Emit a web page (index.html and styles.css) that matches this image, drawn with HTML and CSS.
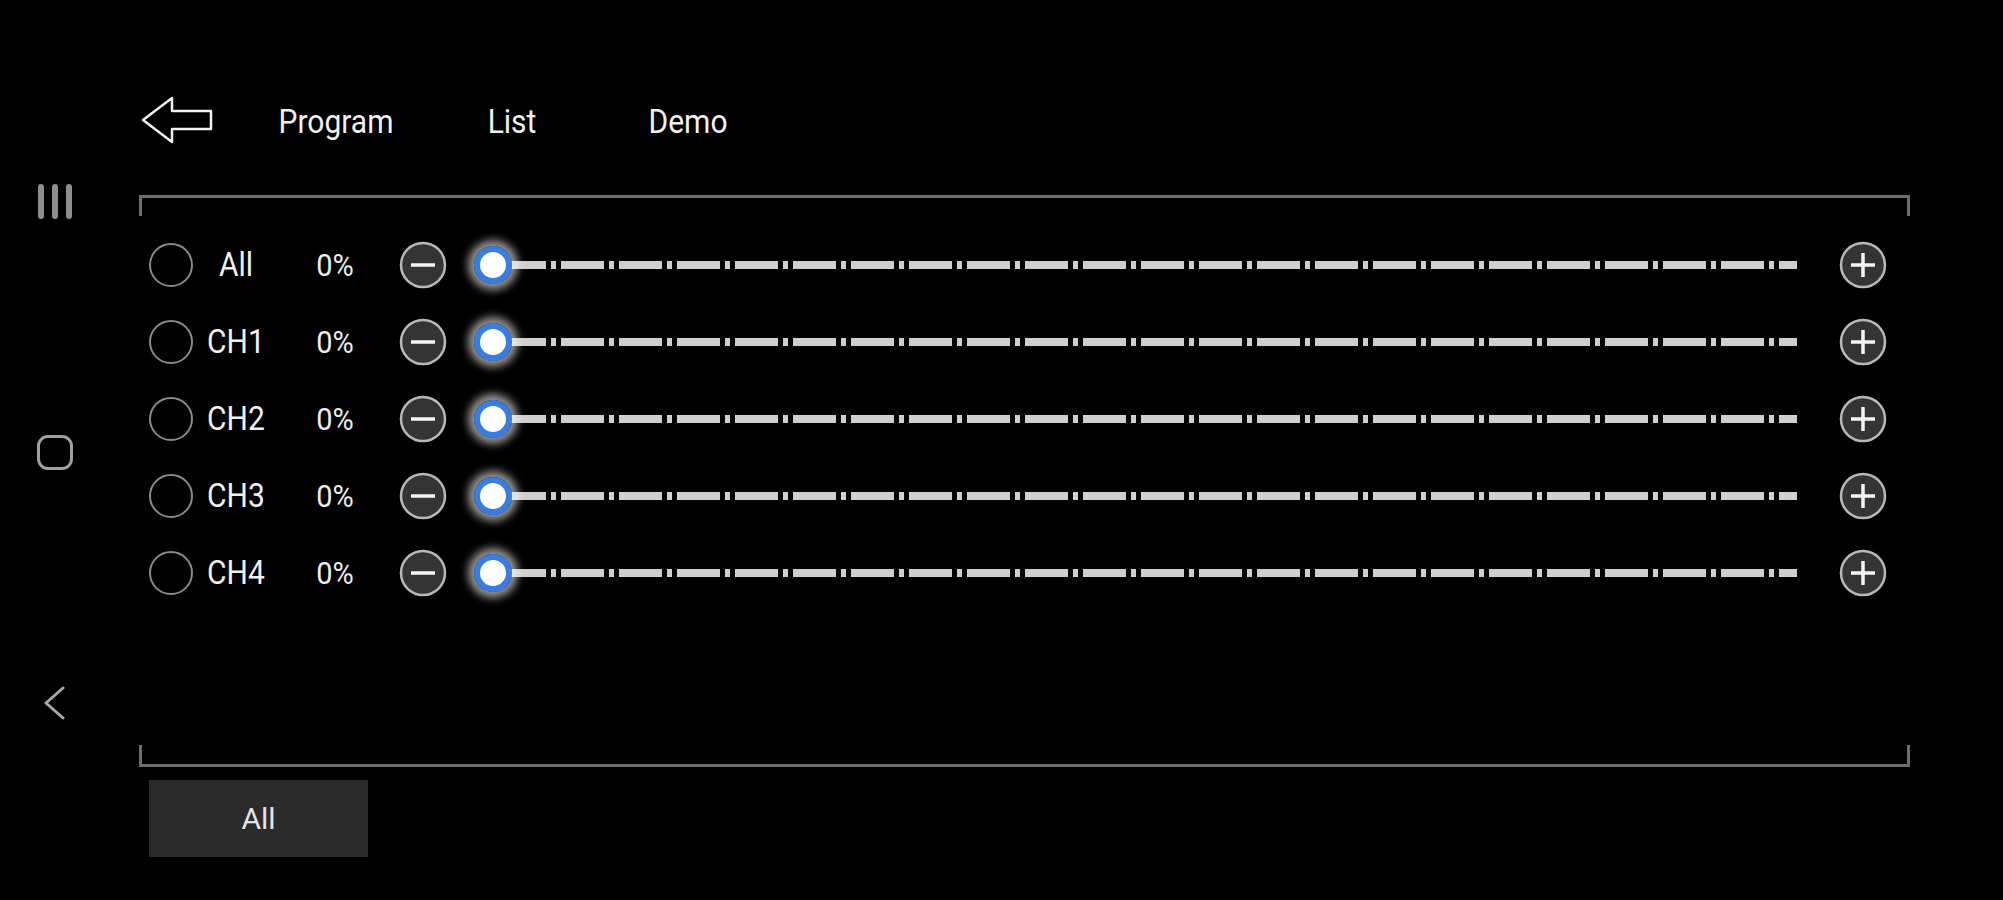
FILE: index.html
```html
<!DOCTYPE html>
<html lang="en">
<head>
<meta charset="utf-8">
<title>Channels</title>
<link rel="stylesheet" href="styles.css">
</head>
<body>
<div class="app">
  <nav class="sidenav">
    <span class="nav-bars"><i></i><i></i><i></i></span>
    <span class="nav-home"></span>
    <svg class="nav-back" width="24" height="34" viewBox="0 0 24 34"><polyline points="20,2 3,17 20,32" fill="none" stroke="#a8a8a8" stroke-width="3" stroke-linecap="round" stroke-linejoin="round"/></svg>
  </nav>
  <main class="main">
    <header class="topbar">
      <span class="back-btn">
        <svg width="72" height="48" viewBox="0 0 72 48"><polygon points="2,24 31,2 31,15 70,15 70,33 31,33 31,46" fill="none" stroke="#f2f2f2" stroke-width="2.5" stroke-linejoin="round"/></svg>
      </span>
      <span class="tab">Program</span>
      <span class="tab">List</span>
      <span class="tab">Demo</span>
    </header>
    <section class="frame">
      <div class="bracket bracket-top"></div>
      <div class="rows">
        <div class="row">
          <span class="radio"></span><span class="label">All</span><span class="pct">0%</span>
          <svg class="btn-icon minus" width="48" height="48" viewBox="0 0 48 48"><circle cx="24" cy="24" r="22" fill="#343434" stroke="#b8b8b8" stroke-width="2.5"/><line x1="12" y1="24" x2="36" y2="24" stroke="#f4f4f4" stroke-width="3.5"/></svg>
          <div class="slider"><span class="thumb"></span><span class="track"></span></div>
          <svg class="btn-icon plus" width="48" height="48" viewBox="0 0 48 48"><circle cx="24" cy="24" r="22" fill="#343434" stroke="#b8b8b8" stroke-width="2.5"/><line x1="12" y1="24" x2="36" y2="24" stroke="#f4f4f4" stroke-width="3.5"/><line x1="24" y1="12" x2="24" y2="36" stroke="#f4f4f4" stroke-width="3.5"/></svg>
        </div>
        <div class="row">
          <span class="radio"></span><span class="label">CH1</span><span class="pct">0%</span>
          <svg class="btn-icon minus" width="48" height="48" viewBox="0 0 48 48"><circle cx="24" cy="24" r="22" fill="#343434" stroke="#b8b8b8" stroke-width="2.5"/><line x1="12" y1="24" x2="36" y2="24" stroke="#f4f4f4" stroke-width="3.5"/></svg>
          <div class="slider"><span class="thumb"></span><span class="track"></span></div>
          <svg class="btn-icon plus" width="48" height="48" viewBox="0 0 48 48"><circle cx="24" cy="24" r="22" fill="#343434" stroke="#b8b8b8" stroke-width="2.5"/><line x1="12" y1="24" x2="36" y2="24" stroke="#f4f4f4" stroke-width="3.5"/><line x1="24" y1="12" x2="24" y2="36" stroke="#f4f4f4" stroke-width="3.5"/></svg>
        </div>
        <div class="row">
          <span class="radio"></span><span class="label">CH2</span><span class="pct">0%</span>
          <svg class="btn-icon minus" width="48" height="48" viewBox="0 0 48 48"><circle cx="24" cy="24" r="22" fill="#343434" stroke="#b8b8b8" stroke-width="2.5"/><line x1="12" y1="24" x2="36" y2="24" stroke="#f4f4f4" stroke-width="3.5"/></svg>
          <div class="slider"><span class="thumb"></span><span class="track"></span></div>
          <svg class="btn-icon plus" width="48" height="48" viewBox="0 0 48 48"><circle cx="24" cy="24" r="22" fill="#343434" stroke="#b8b8b8" stroke-width="2.5"/><line x1="12" y1="24" x2="36" y2="24" stroke="#f4f4f4" stroke-width="3.5"/><line x1="24" y1="12" x2="24" y2="36" stroke="#f4f4f4" stroke-width="3.5"/></svg>
        </div>
        <div class="row">
          <span class="radio"></span><span class="label">CH3</span><span class="pct">0%</span>
          <svg class="btn-icon minus" width="48" height="48" viewBox="0 0 48 48"><circle cx="24" cy="24" r="22" fill="#343434" stroke="#b8b8b8" stroke-width="2.5"/><line x1="12" y1="24" x2="36" y2="24" stroke="#f4f4f4" stroke-width="3.5"/></svg>
          <div class="slider"><span class="thumb"></span><span class="track"></span></div>
          <svg class="btn-icon plus" width="48" height="48" viewBox="0 0 48 48"><circle cx="24" cy="24" r="22" fill="#343434" stroke="#b8b8b8" stroke-width="2.5"/><line x1="12" y1="24" x2="36" y2="24" stroke="#f4f4f4" stroke-width="3.5"/><line x1="24" y1="12" x2="24" y2="36" stroke="#f4f4f4" stroke-width="3.5"/></svg>
        </div>
        <div class="row">
          <span class="radio"></span><span class="label">CH4</span><span class="pct">0%</span>
          <svg class="btn-icon minus" width="48" height="48" viewBox="0 0 48 48"><circle cx="24" cy="24" r="22" fill="#343434" stroke="#b8b8b8" stroke-width="2.5"/><line x1="12" y1="24" x2="36" y2="24" stroke="#f4f4f4" stroke-width="3.5"/></svg>
          <div class="slider"><span class="thumb"></span><span class="track"></span></div>
          <svg class="btn-icon plus" width="48" height="48" viewBox="0 0 48 48"><circle cx="24" cy="24" r="22" fill="#343434" stroke="#b8b8b8" stroke-width="2.5"/><line x1="12" y1="24" x2="36" y2="24" stroke="#f4f4f4" stroke-width="3.5"/><line x1="24" y1="12" x2="24" y2="36" stroke="#f4f4f4" stroke-width="3.5"/></svg>
        </div>
      </div>
      <div class="bracket bracket-bottom"></div>
    </section>
    <button class="all-btn">All</button>
  </main>
</div>
</body>
</html>
```
FILE: styles.css
```css
* { box-sizing: border-box; }

html, body {
  margin: 0;
  padding: 0;
  background: #000;
}

body {
  width: 2003px;
  height: 900px;
  overflow: hidden;
  font-family: Roboto, "Noto Sans", "Liberation Sans", sans-serif;
  color: #eeeeee;
}

.app {
  display: flex;
  height: 900px;
}

/* side navigation */
.sidenav {
  width: 110px;
  flex: none;
  display: flex;
  flex-direction: column;
  align-items: center;
  padding-top: 184px;
  gap: 216px;
}

.nav-bars {
  display: flex;
  gap: 8px;
  height: 35px;
}

.nav-bars i {
  display: block;
  width: 6px;
  height: 35px;
  border-radius: 3px;
  background: #8e8e8e;
}

.nav-home {
  display: block;
  width: 36px;
  height: 35px;
  border: 3px solid #a0a0a0;
  border-radius: 11px;
}

.nav-back {
  display: block;
}

/* main column */
.main {
  flex: 1;
  padding-left: 29px;
  display: flex;
  flex-direction: column;
}

.topbar {
  display: flex;
  align-items: center;
  height: 48px;
  margin-top: 96px;
  margin-bottom: 51px;
}

.back-btn {
  display: block;
  width: 72px;
  height: 48px;
  margin-left: 2px;
}

.back-btn svg { display: block; }

.tab {
  width: 176px;
  text-align: center;
  font-size: 30px;
  line-height: 48px;
  padding-top: 4px;
  color: #f0f0f0;
  transform: scaleY(1.08);
}

.back-btn + .tab { margin-left: 35px; }

/* framed channel area */
.frame {
  width: 1771px;
  height: 572px;
  display: flex;
  flex-direction: column;
}

.bracket {
  flex: none;
  border: 3px solid #6e6e6e;
}

.bracket-top {
  height: 21px;
  border-bottom: none;
}

.bracket-bottom {
  height: 22px;
  border-top: none;
}

.rows {
  flex: 1;
  padding-top: 10px;
}

.row {
  height: 77px;
  display: flex;
  align-items: center;
  padding-left: 10px;
}

.radio {
  flex: none;
  width: 44px;
  height: 44px;
  border: 2.5px solid #8a8a8a;
  border-radius: 50%;
}

.label {
  width: 86px;
  text-align: center;
  font-size: 30px;
  color: #f0f0f0;
  transform: scaleY(1.1);
}

.pct {
  width: 112px;
  text-align: center;
  font-size: 29px;
  color: #ececec;
  transform: scaleY(1.1);
}

.btn-icon {
  display: block;
  flex: none;
}

.minus { margin-left: 8px; }

.slider {
  position: relative;
  width: 1322px;
  height: 48px;
  margin-left: 28px;
  display: flex;
  align-items: center;
}

.track {
  display: block;
  margin-left: 28px;
  flex: 1;
  height: 8px;
  background: repeating-linear-gradient(90deg,
    #cfcfcf 0 43px,
    transparent 43px 48px,
    #cfcfcf 48px 53px,
    transparent 53px 58px);
}

.thumb {
  position: absolute;
  left: -1px;
  top: 5px;
  width: 38px;
  height: 38px;
  border-radius: 50%;
  border: 6px solid #3a7de0;
  background: radial-gradient(circle, #ffffff 0 60%, #e8f0ff 100%);
  box-shadow: 0 0 8px 6px rgba(255, 252, 245, 0.6);
  z-index: 1;
}

.plus { margin-left: 42px; }

/* bottom button */
.all-btn {
  width: 219px;
  height: 77px;
  margin-top: 13px;
  margin-left: 10px;
  border: none;
  padding: 0;
  background: #2b2b2b;
  color: #e4e4e4;
  font-family: Roboto, "Noto Sans", "Liberation Sans", sans-serif;
  font-size: 30px;
}
```
